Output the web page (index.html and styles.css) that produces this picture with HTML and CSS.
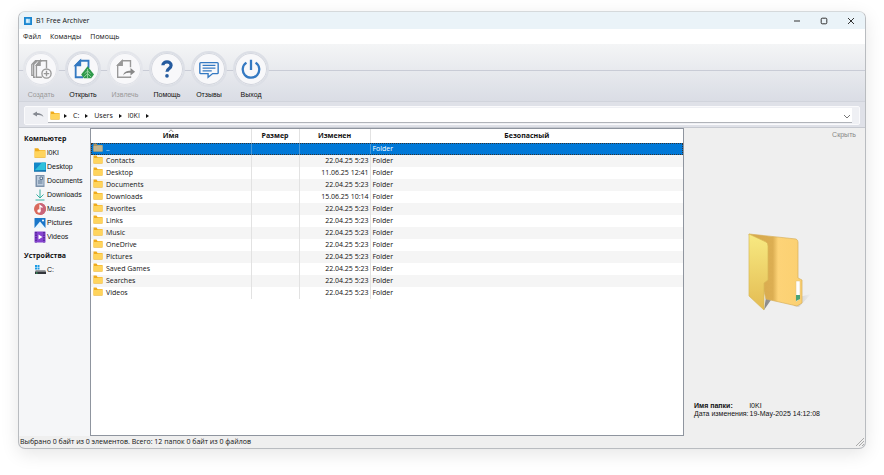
FILE: index.html
```
<!DOCTYPE html>
<html lang="ru">
<head>
    <meta charset="UTF-8">
    <meta name="viewport" content="width=device-width, initial-scale=1.0">
    <title>B1 Free Archiver</title>
    <link rel="stylesheet" href="styles.css">
</head>
<body>
    <!-- shared icons -->
    <svg class="defs" width="0" height="0">
        <symbol id="folder" viewBox="0 0 20 18">
            <path d="M1 1h6l2 3h10v12H1z" fill="#efab1c"/>
            <path d="M1 6h7l2-1h9v12H1z" fill="#ffd45c"/>
            <path d="M1 16h18v1H1z" fill="#e8b23a"/>
        </symbol>
    </svg>

    <div class="window">
        <header class="titlebar">
            <svg class="logo" viewBox="0 0 18 18">
                <rect width="18" height="18" fill="#1b86d0"/>
                <rect x="4" y="4" width="10" height="10" fill="#8fd0f5"/>
                <path d="M6 5v8M6 5h2v8M11 5v8M6 9h3" stroke="#fff" stroke-width="1.4" fill="none"/>
            </svg>
            <h1>B1 Free Archiver</h1>
            <div class="win-buttons">
                <button aria-label="Свернуть"><svg viewBox="0 0 8 8"><path d="M1 4h6"/></svg></button>
                <button aria-label="Развернуть"><svg viewBox="0 0 8 8"><rect x="1.200" y="1.200" width="5.600" height="5.600" rx="1"/></svg></button>
                <button aria-label="Закрыть"><svg viewBox="0 0 8 8"><path d="M1 1l6 6M7 1L1 7"/></svg></button>
            </div>
        </header>

        <nav class="menu">
            <a href="#">Файл</a>
            <a href="#">Команды</a>
            <a href="#">Помощь</a>
        </nav>

        <div class="toolbar">
            <button class="tool" disabled>
                <span class="circle">
                    <svg viewBox="0 0 24 24" fill="none" stroke="#999" stroke-width="1.500">
                        <path d="M4 19H2V7l4-4h7M6 21H4V7l4-4"/>
                        <path d="M13 21H7V8l4-5h7v8"/>
                        <path d="M11 3v5H7z" fill="#999"/>
                        <circle cx="18" cy="17" r="5"/>
                        <path d="M15 17h6M18 14v6"/>
                    </svg>
                </span>
                <span>Создать</span>
            </button>
            <button class="tool">
                <span class="circle">
                    <svg viewBox="0 0 24 24" fill="none" stroke="#3479c2" stroke-width="2">
                        <path d="M12 21H4V8l5-5h9v8"/>
                        <path d="M9 3v5H4z" fill="#3479c2"/>
                        <path d="M17 9l7 9-3 4h-8l-3-4z" fill="#2f9a4b" stroke="none"/>
                        <path d="M17 12v10M14 17l3-3 3 3M13 21l4-4 4 4" stroke="#9fd5a6" stroke-width="1"/>
                    </svg>
                </span>
                <span>Открыть</span>
            </button>
            <button class="tool" disabled>
                <span class="circle">
                    <svg viewBox="0 0 24 24" fill="none" stroke="#999" stroke-width="1.500">
                        <path d="M18 20v1H4V8l5-5h9v7"/>
                        <path d="M9 3v5H4z" fill="#999"/>
                        <path d="M10 19c1-4 4-5 8-5v-3l5 4-5 4v-3c-3 0-6 0-8 3z" fill="#888" stroke="none"/>
                    </svg>
                </span>
                <span>Извлечь</span>
            </button>
            <button class="tool">
                <span class="circle">
                    <svg viewBox="0 0 24 24" fill="none" stroke="#255b9f" stroke-width="3.500">
                        <path d="M7.500 8c0-5 9-5 9 0 0 4-4.500 3-4.500 7"/>
                        <circle cx="12" cy="19.500" r="2" fill="#255b9f" stroke="none"/>
                    </svg>
                </span>
                <span>Помощь</span>
            </button>
            <button class="tool">
                <span class="circle">
                    <svg viewBox="0 0 24 24" fill="none" stroke="#3479c2" stroke-width="1.500">
                        <path d="M3 5h18q1 0 1 1v10q0 1-1 1h-5l-5 4v-4H3q-1 0-1-1V6q0-1 1-1z"/>
                        <path d="M5 8h14M5 11h14M5 14h10"/>
                    </svg>
                </span>
                <span>Отзывы</span>
            </button>
            <button class="tool">
                <span class="circle">
                    <svg viewBox="0 0 24 24" fill="none" stroke="#3479c2" stroke-width="2.500">
                        <path d="M12 2v11M7 5a9 9 0 1 0 10 0"/>
                    </svg>
                </span>
                <span>Выход</span>
            </button>
        </div>

        <div class="address">
            <div class="address-panel">
                <button class="back" aria-label="Назад">
                    <svg viewBox="0 0 24 14"><path d="M1 6l9-5v3c6 0 11 2 13 8-4-4-8-4-13-4v3z" fill="#868a92"/></svg>
                </button>
                <div class="path">
                    <svg class="folder"><use href="#folder"/></svg>
                    <i class="arrow"></i>
                    <a href="#">C:</a>
                    <i class="arrow"></i>
                    <a href="#">Users</a>
                    <i class="arrow"></i>
                    <a href="#">l0KI</a>
                    <i class="arrow"></i>
                    <button class="drop" aria-label="История"><svg viewBox="0 0 8 8"><path d="M1 3l3 3 3-3"/></svg></button>
                </div>
            </div>
        </div>

        <main class="main">
            <aside class="sidebar">
                <h2>Компьютер</h2>
                <ul>
                    <li><a href="#"><svg class="folder"><use href="#folder"/></svg>l0KI</a></li>
                    <li><a href="#"><svg viewBox="0 0 24 24"><rect y="3" width="24" height="18" rx="1" fill="#1488c8"/><path d="M0 20L16 3h7v15z" fill="#2fc1dc"/><path d="M0 19h24v2H0z" fill="#0c5f9c"/></svg>Desktop</a></li>
                    <li><a href="#"><svg viewBox="0 0 24 24"><rect x="3" width="18" height="24" rx="1" fill="#7d92ab"/><rect x="6" y="2" width="13" height="19" fill="#bccbdc"/><path d="M12 4h5v5h-5zM8 12h9M8 16h9" stroke="#5f7894" stroke-width="2" fill="#e8eef5"/></svg>Documents</a></li>
                    <li><a href="#"><svg viewBox="0 0 24 24" fill="none" stroke="#35b0a0" stroke-width="2"><path d="M12 1v17M5 11l7 7 7-7M3 22h18"/></svg>Downloads</a></li>
                    <li><a href="#"><svg viewBox="0 0 24 24"><circle cx="12" cy="12" r="12" fill="#d9695c"/><path d="M12 0a12 12 0 0 1 0 24z" fill="#c9647a"/><circle cx="10" cy="16" r="3.500" fill="#fff"/><path d="M12 16V5l5 4" stroke="#fff" stroke-width="2.500" fill="none"/></svg>Music</a></li>
                    <li><a href="#"><svg viewBox="0 0 24 24"><rect x="1" y="2" width="22" height="20" rx="1" fill="#1976c9"/><path d="M1 22L12 9l11 13z" fill="#e8f6ff"/><circle cx="18" cy="7" r="2" fill="#fff"/></svg>Pictures</a></li>
                    <li><a href="#"><svg viewBox="0 0 24 24"><rect x="1" y="1" width="22" height="22" rx="1" fill="#8542cf"/><path d="M4 2v21M20 2v21" stroke="#4c2391" stroke-width="3" stroke-dasharray="3 2"/><path d="M9 7l8 5-8 5z" fill="#fff"/></svg>Videos</a></li>
                </ul>
                <h2>Устройства</h2>
                <ul>
                    <li><a href="#"><svg viewBox="0 0 24 24"><path d="M2 2h4v4H2zM7 2h4v4H7zM2 7h4v4H2zM7 7h4v4H7z" fill="#1c9ce5"/><path d="M3 12h20v3H3z" fill="#9a9da1"/><path d="M2 15h22v5H2z" fill="#33363b"/><path d="M4 17h3v2H4z" fill="#35c46b"/></svg>C:</a></li>
                </ul>
            </aside>

            <div class="files">
                <table>
                    <colgroup>
                        <col class="c-name"><col class="c-size"><col class="c-date"><col>
                    </colgroup>
                    <thead>
                        <tr><th class="sorted">Имя<svg viewBox="0 0 8 4"><path d="M1 4l3-3 3 3"/></svg></th><th>Размер</th><th>Изменен</th><th>Безопасный</th></tr>
                    </thead>
                    <tbody>
                        <tr class="selected"><td><svg class="folder"><use href="#folder"/></svg>..</td><td></td><td></td><td>Folder</td></tr>
                        <tr><td><svg class="folder"><use href="#folder"/></svg>Contacts</td><td></td><td>22.04.25 5:23</td><td>Folder</td></tr>
                        <tr><td><svg class="folder"><use href="#folder"/></svg>Desktop</td><td></td><td>11.06.25 12:41</td><td>Folder</td></tr>
                        <tr><td><svg class="folder"><use href="#folder"/></svg>Documents</td><td></td><td>22.04.25 5:23</td><td>Folder</td></tr>
                        <tr><td><svg class="folder"><use href="#folder"/></svg>Downloads</td><td></td><td>15.06.25 10:14</td><td>Folder</td></tr>
                        <tr><td><svg class="folder"><use href="#folder"/></svg>Favorites</td><td></td><td>22.04.25 5:23</td><td>Folder</td></tr>
                        <tr><td><svg class="folder"><use href="#folder"/></svg>Links</td><td></td><td>22.04.25 5:23</td><td>Folder</td></tr>
                        <tr><td><svg class="folder"><use href="#folder"/></svg>Music</td><td></td><td>22.04.25 5:23</td><td>Folder</td></tr>
                        <tr><td><svg class="folder"><use href="#folder"/></svg>OneDrive</td><td></td><td>22.04.25 5:23</td><td>Folder</td></tr>
                        <tr><td><svg class="folder"><use href="#folder"/></svg>Pictures</td><td></td><td>22.04.25 5:23</td><td>Folder</td></tr>
                        <tr><td><svg class="folder"><use href="#folder"/></svg>Saved Games</td><td></td><td>22.04.25 5:23</td><td>Folder</td></tr>
                        <tr><td><svg class="folder"><use href="#folder"/></svg>Searches</td><td></td><td>22.04.25 5:23</td><td>Folder</td></tr>
                        <tr><td><svg class="folder"><use href="#folder"/></svg>Videos</td><td></td><td>22.04.25 5:23</td><td>Folder</td></tr>
                    </tbody>
                </table>
            </div>

            <aside class="details">
                <a class="hide" href="#">Скрыть</a>
                <svg class="preview" viewBox="0 0 64 78">
                    <defs>
                        <linearGradient id="front" x1="0" y1="0" x2="0" y2="1">
                            <stop offset="0" stop-color="#f8ea82"/>
                            <stop offset="1" stop-color="#e3bb52"/>
                        </linearGradient>
                        <linearGradient id="rear" x1="0" y1="0" x2="1" y2="0">
                            <stop offset="0" stop-color="#d6a84c"/>
                            <stop offset=".45" stop-color="#dcae52"/>
                            <stop offset=".55" stop-color="#fdd377"/>
                            <stop offset="1" stop-color="#fbd071"/>
                        </linearGradient>
                        <linearGradient id="shade" x1="0" y1="0" x2="1" y2="0">
                            <stop offset="0" stop-color="#888"/>
                            <stop offset="1" stop-color="#eee"/>
                        </linearGradient>
                    </defs>
                    <path d="M16 77l7-10-5-3zM46 73l5 1 12-13-12 3z" fill="url(#shade)"/>
                    <path d="M1 1l47 5q2 1 2 3v36l4 2v23l-5 3-31-7z" fill="url(#rear)" stroke="#d9b05a" stroke-width=".7"/>
                    <path d="M48 48h4v18l-4 3z" fill="#fff" stroke="#e2c27c" stroke-width=".5"/>
                    <path d="M48 62h4v4l-4 2z" fill="#4ba376"/>
                    <path d="M1 1l17 8q2 1 2 4v34l-4 3v27L1 63z" fill="url(#front)" stroke="#d9b958" stroke-width=".7"/>
                </svg>
                <dl>
                    <dt class="strong">Имя папки:</dt><dd>l0KI</dd>
                    <dt>Дата изменения:</dt><dd>19-May-2025 14:12:08</dd>
                </dl>
            </aside>
        </main>

        <footer class="status">
            <span>Выбрано 0 байт из 0 элементов. Всего: 12 папок 0 байт из 0 файлов</span>
            <svg class="grip" viewBox="0 0 8 8"><path d="M0 8l8-8M3 8l5-5M6 8l2-2"/></svg>
        </footer>
    </div>
</body>
</html>
```

FILE: styles.css
```
*{
    box-sizing: border-box;
}
body{
    margin: 0;
    height: 100vh;
    padding: 11px 18px 26px;
    display: flex;
    background: #fff;
    color: #111;
    font: 7px/12px "Open Sans", "Noto Sans", sans-serif;
}
a{
    color: inherit;
    text-decoration: none;
}
button{
    border: 0;
    padding: 0;
    background: none;
    color: inherit;
    font: inherit;
}
h1, h2, ul, dl, dd{
    margin: 0;
    padding: 0;
    font-size: inherit;
}
ul{
    list-style: none;
}
.defs{
    position: absolute;
}
.folder{
    width: 10px;
    height: 9px;
    flex: none;
}

.window{
    flex: 1;
    min-width: 0;
    display: flex;
    flex-direction: column;
    border: 1px solid #b9bcc0;
    border-top-color: #d5d9db;
    border-radius: 7px;
    background: #efefef;
    box-shadow: 0 5px 18px rgba(0,0,0,.1);
    overflow: hidden;
}

/* title */
.titlebar{
    height: 17px;
    display: flex;
    align-items: center;
    gap: 4px;
    padding: 0 5px;
    background: #eaf3f8;
}
.titlebar h1{
    font-weight: normal;
}
.logo{
    width: 8px;
    height: 8px;
}
.win-buttons{
    margin-left: auto;
    display: flex;
}
.win-buttons button{
    width: 27px;
    display: flex;
    justify-content: center;
}
.win-buttons button:last-child{
    width: 18px;
    margin-left: 5px;
}
.win-buttons svg, .drop svg{
    width: 8px;
    height: 8px;
    fill: none;
    stroke: #333;
}

.menu{
    height: 15px;
    display: flex;
    align-items: center;
    gap: 9px;
    padding: 0 4px;
    background: #fff;
}

/* round buttons */
.toolbar{
    height: 58px;
    padding: 7px 0 0 1px;
    display: flex;
    background: linear-gradient(#c9ccd6, #c9ccd6) 0 26px / 100% 1px no-repeat, linear-gradient(#f4f5f6, #dadde5);
    border-bottom: 1px solid #d1d4dc;
}
.tool{
    width: 42px;
    display: flex;
    flex-direction: column;
    align-items: center;
    gap: 2px;
    font-family: "Liberation Sans", sans-serif;
}
.circle{
    width: 36px;
    height: 36px;
    display: flex;
    align-items: center;
    justify-content: center;
    border: 2px solid #dcdfe6;
    border-radius: 50%;
    background: #f8f8fa;
    box-shadow: inset 0 0 0 1px #d3d6de;
}
.circle svg{
    width: 22px;
    height: 22px;
}
.tool:disabled{
    color: #999;
}
.tool:disabled .circle{
    border-color: #e4e6eb;
    box-shadow: inset 0 0 0 1px #e0e2e8;
}

/* path */
.address{
    padding: 4px 5px 2px;
    height: 26px;
    background: #dfe1e8;
    border-bottom: 1px solid #c6c9d0;
}
.address-panel{
    height: 19px;
    display: flex;
    padding: 1px 7px 1px 0;
    border: 1px solid #fafafc;
    border-radius: 2px;
    background: #eff0f4;
}
.back{
    width: 23px;
    padding: 0 0 0 2px;
}
.back svg{
    width: 12px;
    height: 7px;
}
.path{
    flex: 1;
    display: flex;
    align-items: center;
    padding: 1px 0 0 2px;
    background: #fff;
    border-bottom: 1px solid #b0b3b9;
}
.path a{
    padding: 0 6px;
}
.arrow{
    border: 2px solid transparent;
    border-left: 3px solid #111;
    border-right: 0;
}
.folder + .arrow{
    margin-left: 4px;
}
.drop{
    margin-left: auto;
    padding: 0 1px;
    display: flex;
}
.drop svg{
    stroke: #777;
}

.main{
    flex: 1;
    min-height: 0;
    display: flex;
}

.sidebar{
    width: 71px;
    padding: 5px 0 0 5px;
    background: #f5f6f8;
    font-family: "Liberation Sans", sans-serif;
}
.sidebar h2{
    font-family: "Open Sans", sans-serif;
}
.sidebar ul{
    padding: 1px 0 6px 10px;
}
.sidebar li a{
    display: flex;
    align-items: center;
    gap: 1px;
    height: 14px;
}
.sidebar svg{
    width: 12px;
    height: 12px;
    flex: none;
}

/* file list */
.files{
    flex: 1;
    background: #fff;
    border: 1px solid #8f959f;
}
table{
    width: 100%;
    table-layout: fixed;
    border-collapse: collapse;
}
.c-name{
    width: 160px;
}
.c-size{
    width: 48px;
}
.c-date{
    width: 71px;
}
th, td{
    height: 12px;
    padding: 0 2px;
    border-right: 1px solid #e2e2e2;
    text-align: left;
    white-space: nowrap;
}
th{
    height: 14px;
    text-align: center;
}
th:last-child, td:last-child{
    border-right: 0;
}
.sorted{
    position: relative;
}
.sorted svg{
    position: absolute;
    top: 0;
    left: calc(50% - 3px);
    width: 6px;
    height: 3px;
    fill: none;
    stroke: #666;
}
td:nth-child(3){
    text-align: right;
    padding: 0 1px;
}
td .folder{
    margin-right: 3px;
    vertical-align: top;
}
tbody tr:nth-child(even){
    background: #f5f5f5;
}
tbody .selected{
    background: #0078d7;
    color: #fff;
    outline: 1px dotted #333;
    outline-offset: -1px;
}
.selected td{
    border-color: #4a97d6;
}
.selected .folder{
    filter: saturate(.4) brightness(.85);
}

/* right panel */
.details{
    width: 181px;
    padding: 1px 9px 18px 10px;
    display: flex;
    flex-direction: column;
    justify-content: space-between;
    font-family: "Liberation Sans", sans-serif;
}
.hide{
    align-self: flex-end;
    color: #888;
}
.preview{
    width: 64px;
    height: 78px;
    margin: 0 0 0 54px;
}
dl{
    display: grid;
    grid-template-columns: max-content 1fr;
    column-gap: 1px;
    line-height: 8px;
    white-space: nowrap;
}
.strong{
    font-weight: bold;
}

.status{
    height: 12px;
    display: flex;
    justify-content: space-between;
    align-items: center;
    padding: 0 1px;
}
.grip{
    width: 8px;
    height: 8px;
    stroke: #aaa;
}
```
